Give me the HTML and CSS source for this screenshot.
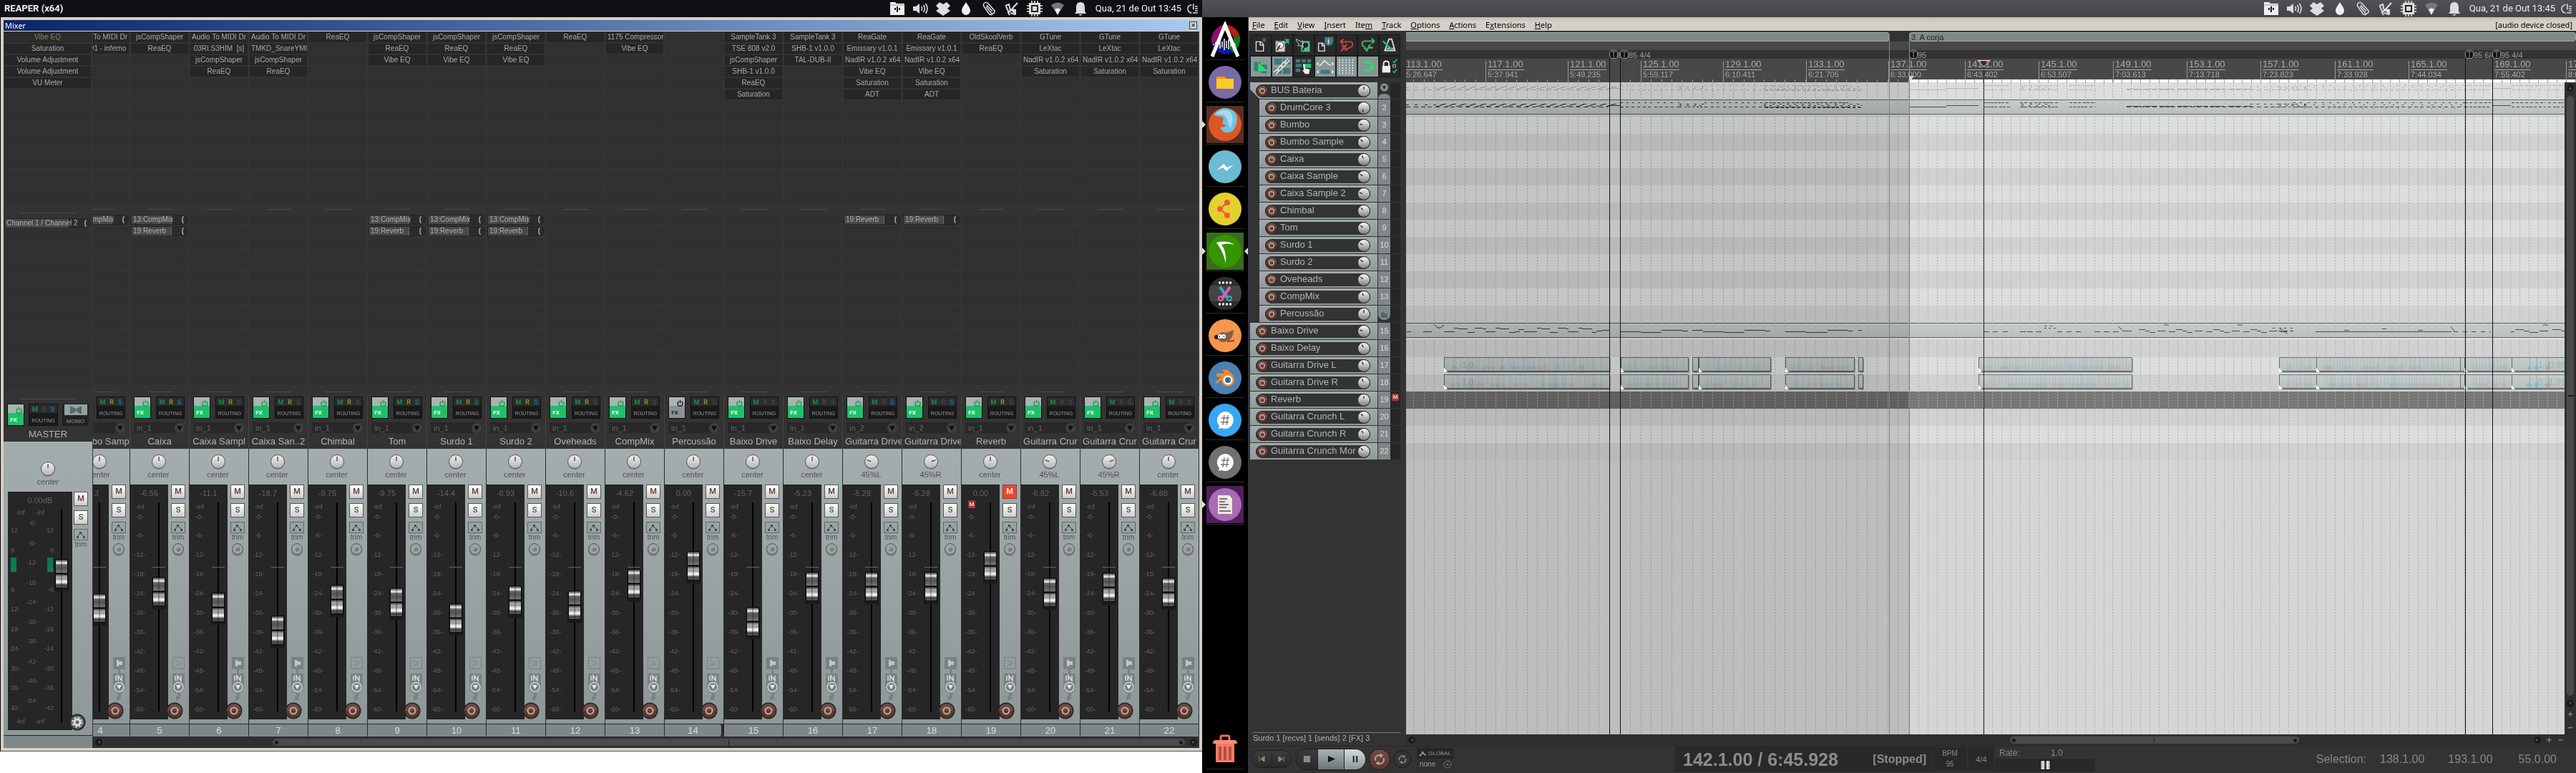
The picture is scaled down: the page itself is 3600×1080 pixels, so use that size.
FILE: index.html
```html
<!DOCTYPE html>
<html lang="pt-BR">
<head>
<meta charset="utf-8">
<title>REAPER (x64)</title>
<link rel="stylesheet" href="styles.css">
</head>
<body>
<svg class="defs" aria-hidden="true">
  <defs>
    <linearGradient id="knobFill" x1="0" y1="0" x2="0" y2="1"><stop offset="0" stop-color="#f2f2f2"/><stop offset="1" stop-color="#b4b4b4"/></linearGradient>
    <linearGradient id="ballFill" x1="0" y1="0" x2="0" y2="1"><stop offset="0" stop-color="#fff"/><stop offset="1" stop-color="#777"/></linearGradient>
    <linearGradient id="armFill" x1="0" y1="0" x2="0" y2="1"><stop offset=".5" stop-color="#6f4a40"/><stop offset=".5" stop-color="#5c372d"/></linearGradient>
    <linearGradient id="itemFill" x1="0" y1="0" x2="0" y2="1"><stop offset="0" stop-color="#aeb5b5"/><stop offset="1" stop-color="#a2a8a8"/></linearGradient>
  </defs>
  <symbol id="i-folder" viewBox="0 0 24 24"><path d="M2 3h7l2 2h11v16H2z" fill="#eee"/><path d="M2 7h20" stroke="#999"/><path d="M12 9v8M9 11v3M15 11v3" stroke="#111" stroke-width="2"/></symbol>
  <symbol id="i-sound" viewBox="0 0 24 24"><path d="M2 9h4l5-4v14l-5-4H2z" fill="#ddd"/><path d="M13.500 9q2 3 0 6M16.500 7q3.500 5 0 10M19.500 5q5 7 0 14" fill="none" stroke="#ddd" stroke-width="1.600"/></symbol>
  <symbol id="i-dropbox" viewBox="0 0 24 24"><path d="M7 3l5 3 5-3 5 5-4 4 4 3-4 3-6 4-6-4-4-3 4-3-4-4z" fill="#ddd"/></symbol>
  <symbol id="i-drop" viewBox="0 0 24 24"><path d="M12 3c3 5 6 8 6 12a6 6 0 0 1-12 0c0-4 3-7 6-12z" fill="#eee"/></symbol>
  <symbol id="i-clip" viewBox="0 0 24 24"><path d="M8 9l7 9a3 3 0 0 0 5-3L11 5a3.500 3.500 0 0 0-6 4l7 10a4 4 0 0 0 5 1M9 7l8 9" fill="none" stroke="#ddd" stroke-width="1.500"/></symbol>
  <symbol id="i-guitar" viewBox="0 0 24 24"><path d="M3 8l5-2 2 9L20 4M10 15l-3 3 2 3M12 13l5 1-1 6-6-2M4 9l4 9" fill="none" stroke="#ddd" stroke-width="2"/><path d="M10 14l8-1v8z" fill="#ddd"/></symbol>
  <symbol id="i-chip" viewBox="0 0 24 24"><path d="M8 1v22M12 1v22M16 1v22M1 8h22M1 12h22M1 16h22" stroke="#ddd" stroke-width="1.600"/><path d="M4 4h16v16H4z" fill="#ddd"/><path d="M7 7h10v10H7z" fill="#222"/><path d="M9 9h6v6H9z" fill="#ddd"/></symbol>
  <symbol id="i-wifi" viewBox="0 0 24 24"><path d="M3 7q9-7 18 0l-9 14z" fill="#777"/><path d="M8 13q4-3 8 0l-4 8z" fill="#eee"/></symbol>
  <symbol id="i-bell" viewBox="0 0 24 24"><path d="M12 3c5 0 6 4 6 8v5l2 3H4l2-3v-5c0-4 1-8 6-8zM9 20h6l-3 2z" fill="#ddd"/></symbol>
  <symbol id="i-power" viewBox="0 0 24 24"><path d="M10 5a7.500 7.500 0 0 0 0 15M13 3v11M16 8h5M16 12h5M16 16h5M12 20h9" fill="none" stroke="#ddd" stroke-width="2"/></symbol>
  <symbol id="i-loop" viewBox="0 0 20 20"><path d="M4 12a6 6 0 0 1 8-8M16 8a6 6 0 0 1-8 8" fill="none" stroke="currentColor" stroke-width="2.200"/><path d="M11 1l5 3-5 4zM9 19l-5-3 5-4z" fill="currentColor"/></symbol>
</svg>

<main class="desktop">
  <section class="monitor monitor-left">
    <header class="topbar topbar-dark">
      <h1 class="topbar-title">REAPER (x64)</h1>
      <div class="tray"></div>
    </header>
    <section class="window" aria-label="Mixer">
      <div class="window-title"><span>Mixer</span><button class="close" aria-label="Close">✕</button></div>
      <div class="mixer">
        <div class="master" id="master"></div>
        <div class="mixer-tracks">
          <div class="channels" id="channels"></div>
          <div class="hscroll"><i class="dot">◂</i><div class="mixer-thumb"><i></i><b></b><i></i></div><i class="dot">▸</i></div>
        </div>
      </div>
    </section>
  </section>

  <section class="monitor monitor-right">
    <header class="topbar topbar-grey"><div class="tray"></div></header>
    <div class="workspace">
      <nav class="dock" aria-label="Dock">
        <button class="app" aria-label="Launcher"><svg viewBox="0 0 52 52"><g fill="none" stroke-width="9" opacity=".8"><path d="M12 30A17 17 0 0 1 26 9" stroke="#b3128a"/><path d="M26 9a17 17 0 0 1 16 12" stroke="#e02810"/><path d="M42 21a17 17 0 0 1-8 19" stroke="#149a20"/><path d="M34 40a17 17 0 0 1-22-10" stroke="#1420c0"/></g><path d="M8 49L26 5l18 44" fill="none" stroke="#fff" stroke-width="5"/><path d="M10 31v2M13 29v6M16 30v4M19 26v12M22 28v8M25 24v16M28 27v10M31 25v14M34 29v6M37 28v8M40 31v2" stroke="#fff" stroke-width="1.500"/></svg></button>
        <button class="app" aria-label="Files"><svg viewBox="0 0 52 52"><circle cx="26" cy="26" r="23" fill="#7a6ba5"/><path d="M14 18h12l2 3v13H14z" fill="#f9940a"/><path d="M14 21h24v14H14z" fill="#ffca28"/></svg></button>
        <button class="app firefox running" aria-label="Firefox"><svg viewBox="0 0 52 52"><circle cx="26" cy="26" r="23" fill="#de5626"/><path d="M10 12Q22-2 36 6q10 6 5 22-4 11-15 9-8-4-5-8 5 2 6-2-6-2-4-6 2-4-1-6-8 0-12-3z" fill="#6cc4e2"/><path d="M12 11q14-10 22-2 5 10 0 22-4-6-5-12-2-7-8-7z" fill="#a7dbee"/></svg></button>
        <button class="app" aria-label="Messenger"><svg viewBox="0 0 52 52"><circle cx="26" cy="26" r="23" fill="#6dbad2"/><path d="M14 31l10-9 5 5 9-4-10 9-5-5z" fill="#fff"/></svg></button>
        <button class="app" aria-label="Share"><svg viewBox="0 0 52 52"><circle cx="26" cy="26" r="23" fill="#e2d02e"/><path d="M29 17L19 26l10 9" fill="none" stroke="#f4593a" stroke-width="2"/><g fill="#f4593a"><circle cx="29" cy="17" r="4"/><circle cx="19" cy="26" r="4"/><circle cx="29" cy="35" r="4"/></g></svg></button>
        <button class="app reaper running" aria-label="Reaper"><svg viewBox="0 0 52 52"><circle cx="26" cy="26" r="23" fill="#349500"/><path d="M14 14q15-4 25 3-10-3-18 0 7 8 6 26Q24 27 14 14z" fill="#fff"/></svg></button>
        <button class="app" aria-label="Video editor"><svg viewBox="0 0 52 52"><circle cx="26" cy="26" r="23" fill="#444"/><path d="M6 15a23 23 0 0 1 40 0zM6 37a23 23 0 0 0 40 0z" fill="#2d2d2d"/><path d="M17 11h20M17 41h20" stroke="#fff" stroke-width="3" stroke-dasharray="3 2"/><path d="M19 17l11 16" stroke="#3ba6c0" stroke-width="4"/><path d="M33 17L22 33" stroke="#e05ab4" stroke-width="4"/><circle cx="32" cy="33" r="3" fill="none" stroke="#3ba6c0" stroke-width="2"/><circle cx="20" cy="33" r="3" fill="none" stroke="#e05ab4" stroke-width="2"/></svg></button>
        <button class="app" aria-label="GIMP"><svg viewBox="0 0 52 52"><circle cx="26" cy="26" r="23" fill="#f7964d"/><path d="M13 27q7-8 15-5l10-4q-1 11-6 14-11 6-15 0z" fill="#7c6146"/><circle cx="14" cy="28" r="3" fill="#222"/><circle cx="19" cy="27" r="3" fill="#fff"/><circle cx="24" cy="27" r="3" fill="#fff"/><path d="M18 27h1M24 27h1" stroke="#000" stroke-width="2"/><path d="M29 34l10-1" stroke="#c22" stroke-width="2"/></svg></button>
        <button class="app" aria-label="Blender"><svg viewBox="0 0 52 52"><circle cx="26" cy="26" r="23" fill="#4a80b4"/><path d="M13 33l13-10H16v-2h13l-4-5h4l8 8" fill="none" stroke="#f28c28" stroke-width="3"/><circle cx="30" cy="29" r="9" fill="#f28c28"/><circle cx="30" cy="29" r="6.500" fill="#fff"/><circle cx="30" cy="29" r="4" fill="#2a6aa8"/></svg></button>
        <button class="app" aria-label="Chat"><svg viewBox="0 0 52 52"><circle cx="26" cy="26" r="23" fill="#38a7f0"/><path d="M26 14a12 12 0 1 1-5 23l-4 1 1-4a12 12 0 0 1 8-20z" fill="#fff"/><path d="M25 19l-2 14M30 19l-2 14M21 23h11M20 29h11" stroke="#777" stroke-width="1.300"/></svg></button>
        <button class="app" aria-label="Chat offline"><svg viewBox="0 0 52 52"><circle cx="26" cy="26" r="23" fill="#717171"/><path d="M26 14a12 12 0 1 1-5 23l-4 1 1-4a12 12 0 0 1 8-20z" fill="#fff"/><path d="M25 19l-2 14M30 19l-2 14M21 23h11M20 29h11" stroke="#777" stroke-width="1.300"/></svg></button>
        <button class="app notes running" aria-label="Notes"><svg viewBox="0 0 52 52"><circle cx="26" cy="26" r="23" fill="#a86cb4"/><path d="M16 13h16l4 5v21H16z" fill="#ecebda"/><path d="M31 13l5 6h-5z" fill="#fff"/><path d="M18 18h11M18 22h8M18 26h13M18 30h10M18 35h16" stroke="#84698c" stroke-width="2"/></svg></button>
        <button class="app trash" aria-label="Trash"><svg viewBox="0 0 52 52"><path d="M20 13v-4q0-2 2-2h8q2 0 2 2v4" fill="none" stroke="#ee6f58" stroke-width="3"/><path d="M9 18q0-5 4-5h26q4 0 4 5z" fill="#fb8d78"/><path d="M13 18h26v26H13z" fill="#f27c66"/><path d="M19 22v19M26 22v19M33 22v19" stroke="#b54c40" stroke-width="4"/></svg></button>
      </nav>

      <section class="daw">
        <nav class="menubar">
          <a href="#"><u>F</u>ile</a><a href="#"><u>E</u>dit</a><a href="#"><u>V</u>iew</a><a href="#"><u>I</u>nsert</a><a href="#">Ite<u>m</u></a><a href="#"><u>T</u>rack</a><a href="#"><u>O</u>ptions</a><a href="#"><u>A</u>ctions</a><a href="#">E<u>x</u>tensions</a><a href="#"><u>H</u>elp</a>
          <span class="device">[audio device closed]</span>
        </nav>
        <div class="project">
          <aside class="tcp">
            <div class="toolbar">
              <button aria-label="New project"><svg viewBox="0 0 30 30"><path d="M8 10h7l4 4v10H8zM14 10v5h5" fill="none" stroke="#ddd" stroke-width="1.500"/><path d="M20 4v7M17 5l6 5M23 5l-6 5" stroke="#4c9a70"/></svg></button>
              <button aria-label="Open project"><svg viewBox="0 0 30 30"><rect x="5" y="9" width="14" height="16" fill="#ccc"/><circle cx="12" cy="15" r="5" fill="#fff" stroke="#333"/><path d="M12 15l-5 8" stroke="#333" stroke-width="2"/><path d="M16 14l5-5-3-3h7v8l-3-3-4 4z" fill="#1ec06c"/></svg></button>
              <button aria-label="Save project"><svg viewBox="0 0 30 30"><rect x="11" y="9" width="13" height="16" fill="#4cbd78"/><circle cx="18" cy="15" r="4.500" fill="#272727" stroke="#9dc" /><path d="M18 15l-5 8" stroke="#222" stroke-width="2"/><path d="M4 6l7 4 2-2v8H6l2-2-4-5z" fill="#333" stroke="#ccc"/></svg></button>
              <button aria-label="Project settings"><svg viewBox="0 0 30 30"><path d="M5 12h6l3 3v9H5zM10 12v4h4" fill="none" stroke="#ddd" stroke-width="1.500"/><path d="M14 3h13v7q-1 6-7 6-6-1-6-7z" fill="#42777a"/><path d="M20 7v6M20 5v1" stroke="#ddd" stroke-width="2"/></svg></button>
              <button aria-label="Undo"><svg viewBox="0 0 30 30"><path d="M7 10h13q4 0 4 4t-7 6l-5 3M10 6l-4 4 4 4" fill="none" stroke="#cb4242" stroke-width="2"/><path d="M8 15l7 8M15 14l-8 10" stroke="#cb4242" stroke-width="2.500"/></svg></button>
              <button aria-label="Redo"><svg viewBox="0 0 30 30"><path d="M24 9H11q-5 0-5 4t5 5M20 5l4 4-4 4" fill="none" stroke="#49b56e" stroke-width="2"/><path d="M9 19l4 4 5-9M17 19h5" fill="none" stroke="#49b56e" stroke-width="2.500"/></svg></button>
              <button aria-label="Metronome"><svg viewBox="0 0 30 30"><path d="M8 23L14 6h4l5 17zM11 20h10" fill="none" stroke="#ddd" stroke-width="2"/><path d="M5 9l14 13" stroke="#1ec06c" stroke-width="2.500"/><path d="M7 13l6-2-2 5z" fill="#1ec06c"/></svg></button>
              <button class="on" aria-label="Auto crossfade"><svg viewBox="0 0 30 30"><path d="M5 8h10v14H5zM15 12h9v13h-9z" fill="#40787a"/><path d="M11 8l14 14H11z" fill="#22e06c"/></svg></button>
              <button class="on" aria-label="Item grouping"><svg viewBox="0 0 30 30"><path d="M3 3h11v9H3zM16 3h11v9H16zM3 17h11v9H3zM16 17h11v9H16z" fill="#40787a"/><path d="M4 25L25 4" stroke="#ddd" stroke-width="6"/><path d="M4 25L25 4" stroke="#6a7a7a" stroke-width="2" stroke-dasharray="5 3"/></svg></button>
              <button aria-label="Ripple edit"><svg viewBox="0 0 30 30"><path d="M3 4h7v5H3zM12 4h6v5h-6zM20 4h6v5h-6zM3 11h9v5H3zM3 18h7v5H3z" fill="#40787a"/><path d="M14 11h12v6H14z" fill="#1ed068"/><path d="M14 11l3 1v6l7 1-1 7h-6l-4-5 2-1z" fill="#eee"/></svg></button>
              <button class="on" aria-label="Move envelopes"><svg viewBox="0 0 30 30"><path d="M8 20h14v6H8z" fill="#40787a"/><path d="M6 14l3-2 5-6 5 5 4 2" fill="none" stroke="#eee" stroke-width="1.500"/><path d="M5 8L2 11l3 3zM25 8l3 3-3 3zM5 20l-3 3 3 3zM25 20l3 3-3 3z" fill="#eee"/></svg></button>
              <button class="on" aria-label="Grid lines"><svg viewBox="0 0 30 30"><path d="M4 4v22M9 4v22M14 4v22M19 4v22M24 4v22" stroke="#fff" stroke-width="1.500" stroke-dasharray="2 2"/></svg></button>
              <button class="on" aria-label="Snap"><svg viewBox="0 0 30 30"><path d="M5 4v22M10 4v22M15 4v22M20 4v22M25 4v22" stroke="#40a060" stroke-dasharray="2 2"/><path d="M8 9h8q6 0 6 5t-6 6H8" fill="none" stroke="#22e06c" stroke-width="3"/></svg></button>
              <button aria-label="Lock settings"><svg viewBox="0 0 30 30"><path d="M4 14h12v10H4z" fill="#eee"/><path d="M6 14v-3q0-4 4-4t4 4v3" fill="none" stroke="#eee" stroke-width="2"/><path d="M20 7l2 2 4-5M20 22l2 2 4-5" fill="none" stroke="#1ed068" stroke-width="1.500"/><path d="M20 12h4v4h-4z" fill="none" stroke="#ccc"/></svg></button>
            </div>
            <div class="track-list" id="trackList"></div>
            <p class="status">Surdo 1 [recvs] 1 [sends] 2 [FX] 3</p>
          </aside>
          <section class="arrange">
            <div class="ruler">
              <div class="regions"></div><div class="markers"></div><div class="tempos"></div><div class="times"></div>
              <svg class="ruler-marks" id="rulerMarks"></svg>
              <div class="ruler-text" id="rulerText"></div>
            </div>
            <div class="arrange-body">
              <div class="lanes" id="lanes"></div>
              <div class="vscroll"><i class="dot">▴</i><div class="v-thumb"><b></b></div><i class="dot">▾</i><span>+</span><span>−</span></div>
            </div>
            <div class="hscroll arrange-hscroll"><i class="dot">◂</i><div class="arrange-thumb"><i></i><b></b><i></i></div><i class="dot">▸</i><span>+</span><span>−</span></div>
          </section>
        </div>
        <footer class="transport">
          <div class="pill small"><button aria-label="Go to start"><svg viewBox="0 0 12 12"><path d="M2 2v8M10 2L4 6l6 4z" fill="#888" stroke="#888"/></svg></button><button aria-label="Go to end"><svg viewBox="0 0 12 12"><path d="M10 2v8M2 2l6 4-6 4z" fill="#888" stroke="#888"/></svg></button></div>
          <div class="pill big"><button aria-label="Stop"><svg viewBox="0 0 12 12"><path d="M1 1h10v10H1z" fill="#888"/></svg></button><button class="play" aria-label="Play"><svg viewBox="0 0 12 12"><path d="M1 1l11 5-11 5z" fill="#111"/></svg></button><button class="pause" aria-label="Pause"><svg viewBox="0 0 12 12"><path d="M3 1h2v10H3zM8 1h2v10H8z" fill="#111"/></svg></button></div>
          <button class="round record" aria-label="Record"><svg><use href="#i-loop"/></svg></button>
          <button class="round repeat" aria-label="Repeat"><svg><use href="#i-loop"/></svg></button>
          <div class="global"><label for="auto"><svg viewBox="0 0 14 10"><path d="M1 8h3l3-6 3 4 3 2" fill="none" stroke="#999" stroke-width="2"/></svg>GLOBAL</label><select id="auto"><option>none</option></select></div>
          <div class="bigtime"><span>142.1.00 / 6:45.928</span><strong>[Stopped]</strong></div>
          <div class="bpm"><span>BPM</span><span>95</span></div>
          <div class="sig">4/4</div>
          <div class="rate"><label for="rate">Rate:</label><output>1.0</output><input id="rate" type="range" min="0" max="100" value="50"></div>
          <div class="selection"><span>Selection:</span><span>138.1.00</span><span>193.1.00</span><span>55.0.00</span></div>
        </footer>
      </section>
    </div>
  </section>
</main>
<script src="app.js"></script>
</body>
</html>
```

FILE: styles.css
```css
* { box-sizing: border-box; }
body { margin: 0; background: #fff; color: #aaa; font: 11px/14px "Liberation Sans", Arial, sans-serif; overflow: hidden; }
button, select, input { font: inherit; color: inherit; margin: 0; padding: 0; border: 0; background: none; }
button { display: flex; align-items: center; justify-content: center; }
svg { display: block; }
i { font-style: normal; }
.defs { position: absolute; width: 0; height: 0; }
.desktop { display: flex; height: 100vh; }
.monitor { display: flex; flex-direction: column; min-width: 0; }
.monitor-left { flex: 1680 1 0; padding-bottom: 30px; }
.monitor-right { flex: 1920 1 0; }

.topbar { flex: none; display: flex; align-items: center; height: 24px; padding: 0 4px 0 6px; color: #f0f0f0; font: 13px/24px Roboto, sans-serif; }
.topbar-dark { background: #0f1014; }
.topbar-grey { background: linear-gradient(#505155, #434447); }
.topbar-title { margin: 0; font: bold 13px/24px Roboto, sans-serif; }
.tray { display: flex; align-items: center; gap: 8px; margin-left: auto; }
.tray button, .tray svg { width: 24px; height: 24px; }
.tray time { padding: 0 1px; }
.tray .power { width: 18px; margin-left: -2px; }

.window { flex: 1; min-height: 0; display: flex; flex-direction: column; padding: 4px; background: #d4d0c8; border-left: 1px solid #000; border-bottom: 1px solid #555; }
.window-title { flex: none; display: flex; align-items: center; justify-content: space-between; height: 16px; padding: 0 3px 0 2px; border-bottom: 1px solid #d4d0c8; background: linear-gradient(90deg, #0a246a, #a6caf0); color: #fff; font: 11px/15px "Noto Sans", sans-serif; }
.close { width: 11px; height: 11px; background: #d4d0c8; border: 1px solid #444; color: #000; font: bold 8px/9px "DejaVu Sans", sans-serif; }
.mixer { flex: 1; min-height: 0; display: flex; background: #333; }
.mixer-tracks { flex: 1; min-width: 0; display: flex; flex-direction: column; }
.channels { flex: 1; min-height: 0; display: flex; justify-content: flex-end; overflow: hidden; }
.channel { flex: none; width: 83px; display: flex; flex-direction: column; }
.master { flex: none; width: 125px; display: flex; flex-direction: column; border-right: 1px solid #333; }

.fx-list { flex: none; display: flex; flex-direction: column; gap: 2px; padding: 1px 2px 0 1px; }
.slot { height: 14px; background: #303030; overflow: hidden; text-align: center; white-space: nowrap; color: #aaa; font-size: 10px; line-height: 14px; }
.slot.used { display: block; width: 100%; padding: 0 2px; background: #262626; }
.slot.offline { color: #8e7f59; background: #2c2c2c; box-shadow: inset 0 0 0 1px #262626; }
.rule { flex: none; width: 36px; height: 1px; margin: 9px auto 7px; background: #4c4c4c; }
.master .rule { width: 78px; margin-top: 14px; }
.sends { flex: 1; min-height: 0; overflow: hidden; display: flex; flex-direction: column; gap: 2px; padding: 0 2px 0 1px; }
.send { flex: none; height: 14px; border-radius: 0 7px 7px 0; background: #303030; color: #444; text-align: right; padding-right: 7px; font-size: 9px; line-height: 16px; }
.send.used { display: flex; justify-content: space-between; width: 100%; padding: 0 5px 0 0; border: 1px solid #242424; background: #2b2b2b; color: #b0b0b0; font-size: 10px; line-height: 12px; white-space: nowrap; overflow: hidden; }
.send.used span { width: 56px; padding-left: 2px; background: #484848; border-right: 1px solid #666; text-align: left; }
.master .send.used span { width: 88px; overflow: visible; }
.sends + .rule, .master .sends + .rule { margin: 0 auto 6px; }
.io { flex: none; display: flex; gap: 7px; height: 31px; padding: 0 6px 0 5px; border-right: 1px solid #444; }
.master .io { gap: 6px; padding: 0 4px 0 5px; border: 0; }
.fx { flex: none; width: 24px; border: 1px solid #111; background: linear-gradient(#a8b5b0 40%, #1ec06a 40%); flex-direction: column; color: #fff; font: bold 8px/10px Roboto, sans-serif; }
.fx svg { width: 9px; height: 9px; margin: 2px 2px 4px auto; color: #159a50; }
.fx span { margin-right: 6px; }
.fx.off { background: linear-gradient(#a8b5b5 40%, #8a9494 40%); color: #222; }
.fx.off svg { color: #111; }
.routing { width: 41px; border: 1px solid #111; background: linear-gradient(#2c2c2c 40%, #1a1a1a 40%); flex-direction: column; gap: 3px; color: #999; font: 7px/11px "Liberation Sans", sans-serif; }
.routing .mrs { display: flex; gap: 6px; font: bold 9px/13px Roboto, sans-serif; color: #444; }
.mrs .m { color: #128f52; } .mrs .r { color: #8a9014; } .mrs .s { color: #12769a; }
.mono { width: 37px; background: #222; color: #999; flex-direction: column; gap: 4px; font: 8px/10px "Liberation Sans", sans-serif; }
.mono svg { width: 32px; height: 15px; background: #93a0a0; }
.input { flex: none; height: 21px; padding: 5px 7px 1px 5px; border-right: 1px solid #444; }
.input select { display: block; width: 71px; height: 15px; padding-left: 4px; appearance: none; border-radius: 0 8px 8px 0; background: #282828 url("data:image/svg+xml,%3Csvg xmlns='http://www.w3.org/2000/svg' width='14' height='14'%3E%3Ccircle cx='7' cy='7' r='7' fill='%23404040'/%3E%3Cpath d='M3 4h8l-4 7z' fill='%23111'/%3E%3C/svg%3E") right no-repeat; color: #666; font-size: 11px; }
.name { flex: none; height: 21px; padding: 0 3px; border-right: 1px solid #444; text-align: center; white-space: nowrap; overflow: hidden; color: #b4b4b4; font-size: 13px; line-height: 21px; }
.master .name { border: 0; height: 22px; line-height: 23px; }
.strip { flex: none; position: relative; background: linear-gradient(#a4adad, #8e9898); border-right: 1px solid #2a2a2a; height: 384px; }
.master .strip { height: 410px; border: 0; }
.pan { display: flex; flex-direction: column; align-items: center; height: 50px; padding: 7px 3px 0 0; color: #4d5353; }
.master .pan { height: 70px; padding: 27px 0 0; }
.pan svg { width: 22px; height: 22px; }
.deck { display: flex; height: 328px; }
.master .deck { height: 333px; padding-left: 6px; }
.meter { position: relative; flex: none; width: 53px; background: #262626; border-top: 1px solid #1a1a1a; border-bottom: 1px solid #1a1a1a; color: #646464; }
.master .meter { width: 90px; }
.db { height: 21px; line-height: 22px; text-align: center; }
.meter-row { position: relative; display: flex; gap: 4px; }
.scale { width: 27px; text-align: center; font-size: 9px; }
.scale div { height: 27px; line-height: 27px; }
.scale .inf { height: 16px; line-height: 18px; }
.scale .zero { height: 20px; line-height: 14px; }
.fader { appearance: none; writing-mode: vertical-lr; direction: rtl; width: 18px; height: 292px; margin-top: 3px; background: linear-gradient(#666, #666) 0 90px / 18px 1px no-repeat, linear-gradient(90deg, transparent 8px, #000 8px, #000 10px, transparent 10px); }
.fader::-webkit-slider-thumb { appearance: none; width: 18px; height: 41px; border: 1px solid #0a0a0a; background: linear-gradient(90deg, transparent 7px, #0004 7px, #0004 9px, transparent 9px), linear-gradient(#333, #888 2px, #ddd 4px, #eee 5px, #666 7px, #555 12px, #777 18px, #000 19px, #000 20px, #555 21px, #aaa 24px, #999 27px, #eee 30px, #eee 32px, #444 35px, #555 39px); box-shadow: 0 3px 0 1px #1a1a1a; }
.master .fader { height: 298px; background: linear-gradient(90deg, transparent 8px, #000 8px, #000 10px, transparent 10px); }
.master-scale { display: grid; grid-template: 15px 277px 15px / 20px 20px 20px; width: 62px; padding-left: 4px; font-size: 9px; line-height: 14px; }
.master-scale .col { display: flex; flex-direction: column; justify-content: space-between; height: 262px; text-align: center; }
.master-scale .outer { margin-top: 10px; text-align: left; }
.master-scale .right { text-align: right; }
.master-scale .infs { grid-column: 1 / 4; display: flex; gap: 15px; padding-left: 7px; }
.master .meter-row { gap: 4px; }
.bar { position: absolute; top: 91px; width: 8px; height: 20px; background: #0a7a4a; }
.bar.left { left: 4px; } .bar.right { left: 55px; }
.side { flex: 1; display: flex; flex-direction: column; align-items: center; padding-right: 1px; color: #4d5353; font-size: 9px; }
.master .side { padding-right: 4px; }
.ms { flex: none; width: 20px; height: 20px; margin-bottom: 6px; border: 1px solid #555; background: linear-gradient(#fff, #ccc); font: 500 11px/18px Roboto, sans-serif; color: #5c372d; }
.ms.solo { color: #4d5a24; }
.ms.muted { background: #f4452a; color: #fff; }
.env { flex: none; width: 20px; height: 16px; border: 1px solid #5c6666; background: #98a4a4; }
.env svg { width: 16px; height: 12px; }
.side > span { line-height: 11px; font-size: 10px; }
.phase { flex: none; width: 16px; height: 16px; margin-top: 3px; border: 1px solid #555; border-radius: 8px; background: #9ba3a3; box-shadow: 0 2px 0 #7c8484; font-size: 9px; }
.monitoring { width: 18px; height: 64px; margin: auto 0 23px; }
.arm { position: absolute; left: 50px; top: 354px; width: 24px; height: 24px; }
.arm svg { width: 24px; height: 24px; }
.master .arm { left: 91px; top: 380px; }
.muted-badge { position: absolute; left: 9px; top: 21px; width: 10px; height: 11px; border-radius: 1px; background: #a83438; color: #ddd; font: bold 8px/11px Roboto, sans-serif; text-align: center; }
.number { flex: none; height: 18px; border: solid #2a2a2a; border-width: 1px 1px 0 0; background: #7f8888; color: #ddd; text-align: center; font-size: 13px; line-height: 18px; }
.number.folder-end { border-right: 4px solid #2a2a2a; border-radius: 0 6px 6px 0; }
.master .number { border-right: 0; }

.hscroll { flex: none; display: flex; align-items: center; height: 16px; padding: 0 3px; background: #2f2f2f; }
.dot { flex: none; width: 10px; height: 10px; border-radius: 5px; background: #1a1a1a; color: #555; font: 8px/10px "DejaVu Sans", sans-serif; text-align: center; }
.mixer-thumb, .arrange-thumb { display: flex; align-items: center; justify-content: space-between; height: 10px; margin: 0 7px 0 238px; flex: 1; padding: 0 3px; border-radius: 5px; background: #4b4b4b; }
.mixer-thumb i, .arrange-thumb i { width: 5px; height: 5px; border-radius: 3px; background: #1a1a1a; }
.mixer-thumb b, .arrange-thumb b { width: 1px; height: 7px; background: #1a1a1a; }

.workspace { flex: 1; min-height: 0; display: flex; background: #000; }
.dock { flex: none; width: 64px; display: flex; flex-direction: column; align-items: center; padding: 6px 0 5px; gap: 5px; }
.app { position: relative; width: 54px; height: 54px; padding-bottom: 2px; border-bottom: 1px solid #2c2c2c; }
.app svg { width: 52px; height: 52px; }
.firefox svg { background: #5c2f20; } .reaper svg { background: #3a6a20; } .notes svg { background: #50205c; }
.running::before { content: ""; position: absolute; left: -5px; top: 21px; border: solid transparent; border-width: 5px 0 5px 5px; border-left-color: #ddd; }
.reaper::after { content: ""; position: absolute; right: -5px; top: 21px; border: solid transparent; border-width: 5px 5px 5px 0; border-right-color: #ddd; }
.trash { margin-top: auto; }

.daw { flex: 1; min-width: 0; display: flex; flex-direction: column; border-left: 1px solid #26346a; background: #333; }
.menubar { flex: none; display: flex; gap: 13px; height: 20px; padding: 0 5px; border-bottom: 1px solid #2c3628; background: linear-gradient(#bfbab4, #d4d0c8 6px); font: 11px/22px "Noto Sans", sans-serif; color: #000; }
.menubar a { color: #000; text-decoration: none; }
.device { margin-left: auto; }
.project { flex: 1; min-height: 0; display: flex; }
.tcp { flex: none; width: 220px; display: flex; flex-direction: column; padding: 4px 8px 0 2px; }
.toolbar { flex: none; display: grid; grid-template-columns: repeat(7, 30px); grid-auto-rows: 30px; height: 60px; background: #1a1a1a; }
.toolbar button { margin: 1px; background: #292929; }
.toolbar svg { width: 28px; height: 28px; }
.toolbar .on { background: #8a9797; }
.track-list { margin-top: 7px; }
.track { display: flex; height: 24px; padding-bottom: 1px; gap: 1px; }
.track.child { padding-left: 13px; }
.panel { flex: 1; display: flex; padding: 3px 10px 2px 8px; background: linear-gradient(#a3acac, #909a9a); }
.track.parent .panel { clip-path: polygon(0 0, 100% 0, 100% 100%, 13px 100%, 0 10px); }
.track-name { flex: 1; min-width: 0; display: flex; align-items: center; height: 18px; border-radius: 9px; background: #333; color: #b4b4b4; font-size: 13px; line-height: 16px; white-space: nowrap; }
.track-name svg { width: 18px; height: 18px; }
.track-name button { flex: none; width: 18px; height: 18px; }
.track-name span { flex: 1; padding: 0 0 2px 3px; overflow: hidden; }
.tnum { width: 17px; background: #7f8888; color: #ddd; text-align: center; line-height: 23px; }
.tnum svg { width: 17px; height: 23px; background: #333; }
.tmeter { width: 14px; margin-left: -1px; padding: 3px 2px; background: #262626; }
.tmeter b { display: block; width: 10px; border-radius: 1px; background: #a83438; color: #ddd; font: bold 8px/10px Roboto, sans-serif; text-align: center; }
.status { margin: auto 0 3px 4px; border-top: 1px solid #777; color: #b0b0b0; line-height: 15px; }

.arrange { flex: 1; min-width: 0; display: flex; flex-direction: column; }
.ruler { flex: none; position: relative; height: 71px; padding-top: 1px; overflow: hidden; background: #333; }
.regions { height: 13px; } .markers { height: 12px; background: #484848; } .tempos { height: 12px; } .times { height: 33px; background: #484848; }
.ruler-marks, .ruler-text { position: absolute; left: 0; top: 0; width: 100%; height: 71px; }
.ruler-text > * { position: absolute; white-space: nowrap; }
.stamp { top: 39px; color: #a8a8a8; line-height: 13px; }
.stamp b { display: block; width: 51px; border-bottom: 1px solid #a8a8a8; font: 13px/14px "Liberation Sans", sans-serif; }
.tempo { top: 26px; display: flex; color: #999; line-height: 14px; height: 12px; }
.tempo i { width: 12px; height: 12px; border: 1px solid #999; border-radius: 4px; background: #111; text-align: center; line-height: 11px; font-size: 10px; }
.region-name { top: 1px; color: #222; }
.arrange-body { flex: 1; min-height: 0; display: flex; }
.lanes { position: relative; flex: 1; min-width: 0; background: #bcbebc; overflow: hidden; }
.lane { height: 24px; background: #b8b9b8; }
.lane:nth-child(odd) { background: #c4c6c4; }
.lane.muted { background: #5f605f; }
.canvas { position: absolute; left: 0; top: 0; width: 100%; height: 100%; }
.lighten { mix-blend-mode: plus-lighter; }
.vscroll { flex: none; width: 16px; display: flex; flex-direction: column; align-items: center; padding-top: 3px; background: #2f2f2f; }
.vscroll span, .arrange-hscroll span { color: #888; font: bold 13px/16px "Liberation Sans", sans-serif; }
.vscroll span { line-height: 19px; }
.v-thumb { flex: 1; display: flex; align-items: center; justify-content: center; width: 10px; margin: 6px 0; border-radius: 5px; background: #4b4b4b; }
.v-thumb b { width: 7px; height: 2px; background: #1a1a1a; }
.arrange-hscroll { gap: 8px; padding: 0 18px 0 3px; }
.arrange-thumb { flex: none; width: 25%; margin: 0 auto 0 51%; }

.transport { flex: none; display: flex; align-items: center; height: 38px; padding: 0 27px 2px 4px; border-top: 1px solid #2a2a2a; background: #333; color: #888; }
.pill { display: flex; border: 1px solid #1c1c1c; border-radius: 15px; overflow: hidden; background: #333; }
.pill.small { width: 56px; height: 25px; }
.pill.big { width: 98px; height: 30px; margin: 0 4px 0 6px; }
.pill button { flex: 1; border-right: 1px solid #222; background: linear-gradient(#3c3c3c, #2a2a2a); }
.pill button:last-child { border: 0; }
.pill svg { width: 11px; height: 11px; }
.pill .play { flex: 0 0 37px; background: linear-gradient(#a8b5b5, #6a7474); }
.pill .pause { background: linear-gradient(#d4dddd, #8a9494); }
.round { flex: none; border-radius: 50%; border: 1px solid #1c1c1c; background: #333; color: #888; }
.record { width: 30px; height: 30px; background: linear-gradient(#6f4a40, #5c372d); color: #bca69f; }
.record svg { width: 18px; height: 18px; }
.repeat { width: 25px; height: 25px; margin: 0 8px 0 4px; }
.repeat svg { width: 14px; height: 14px; }
.global { width: 51px; height: 31px; background: #262626; }
.global label { display: flex; align-items: center; gap: 2px; height: 15px; padding-left: 2px; color: #999; font: 8px/15px "Liberation Sans", sans-serif; }
.global label svg { width: 12px; height: 8px; }
.global select { width: 51px; height: 16px; padding-left: 4px; appearance: none; color: #999; font-size: 10px; background: #303030 url("data:image/svg+xml,%3Csvg xmlns='http://www.w3.org/2000/svg' width='14' height='12'%3E%3Ccircle cx='6' cy='6' r='5' fill='none' stroke='%23777'/%3E%3Cpath d='M4 5h4l-2 3z' fill='%23777'/%3E%3C/svg%3E") right no-repeat; }
.bigtime { display: flex; align-items: center; justify-content: space-between; width: 360px; height: 35px; margin-left: 309px; padding: 0 8px 0 12px; background: #292929; font: bold 25px/36px "Liberation Sans", sans-serif; color: #8c8c8c; white-space: nowrap; }
.bigtime strong { font-size: 16px; }
.bpm { display: flex; flex-direction: column; justify-content: space-between; width: 50px; height: 35px; padding: 2px 0; border: 1px solid #303030; background: #292929; text-align: center; font-size: 10px; }
.sig { width: 38px; height: 35px; border: 1px solid #303030; background: #292929; text-align: center; font-size: 11px; line-height: 35px; }
.rate { display: grid; grid-template: 17px 18px / 72px 68px; width: 140px; height: 35px; line-height: 18px; font-size: 12px; }
.rate label { padding-left: 6px; }
.rate output { padding-left: 6px; }
.rate input { grid-column: 1 / 3; appearance: none; width: 140px; height: 18px; background: #292929; }
.rate input::-webkit-slider-thumb { appearance: none; width: 15px; height: 14px; border: 1px solid #111; background: linear-gradient(90deg, #999, #eee 4px, #999 5px, #222 6px, #222 7px, #999 8px, #fff 9px, #888); }
.selection { display: flex; gap: 33px; margin-left: auto; font-size: 16px; line-height: 36px; }
.selection span:first-child { margin-right: -14px; }
.selection span:last-child { margin-left: 3px; }
```

FILE: app.js
```js
const tracks = [
  { n: 1, name: 'BUS Bateria', rot: 0, parent: true },
  { n: 2, name: 'DrumCore 3', rot: 200, child: true },
  { n: 3, name: 'Bumbo', rot: -75, child: true },
  { n: 4, name: 'Bumbo Sample', rot: -50, child: true, mix: { fx: ['Audio To MIDI Dr', 'PDM01 - inferno'], sends: ['13:CompMix'], mrs: 'MRS', db: '-12.3', top: 127, mon: 1 } },
  { n: 5, name: 'Caixa', rot: -25, child: true, mix: { fx: ['jsCompShaper', 'ReaEQ'], sends: ['13:CompMix', '19:Reverb'], mrs: 'MRS', db: '-6.56', top: 104 } },
  { n: 6, name: 'Caixa Sample', mixName: 'Caixa Sampl', rot: -55, child: true, mix: { fx: ['Audio To MIDI Dr', '03RI.S3HIM&nbsp; [s]', 'jsCompShaper', 'ReaEQ'], mrs: 'MR', db: '-11.1', top: 126, mon: 1 } },
  { n: 7, name: 'Caixa Sample 2', mixName: 'Caixa San..2', rot: -75, child: true, mix: { fx: ['Audio To MIDI Dr', 'TMKD_SnareYMC', 'jsCompShaper', 'ReaEQ'], mrs: 'MR', db: '-18.7', top: 158, mon: 1 } },
  { n: 8, name: 'Chimbal', rot: -40, child: true, mix: { fx: ['ReaEQ'], mrs: 'MR', db: '-8.75', top: 115 } },
  { n: 9, name: 'Tom', rot: -50, child: true, mix: { fx: ['jsCompShaper', 'ReaEQ', 'Vibe EQ'], sends: ['13:CompMix', '19:Reverb'], mrs: 'MRS', db: '-9.75', top: 119 } },
  { n: 10, name: 'Surdo 1', rot: -60, child: true, mix: { fx: ['jsCompShaper', 'ReaEQ', 'Vibe EQ'], sends: ['13:CompMix', '19:Reverb'], mrs: 'MRS', db: '-14.4', top: 141 } },
  { n: 11, name: 'Surdo 2', rot: -50, child: true, mix: { fx: ['jsCompShaper', 'ReaEQ', 'Vibe EQ'], sends: ['13:CompMix', '19:Reverb'], mrs: 'MRS', db: '-8.93', top: 116 } },
  { n: 12, name: 'Oveheads', rot: -50, child: true, mix: { fx: ['ReaEQ'], mrs: 'MR', db: '-10.6', top: 123 } },
  { n: 13, name: 'CompMix', rot: -20, child: true, mix: { fx: ['1175 Compressor', 'Vibe EQ'], mrs: 'MR', db: '-4.62', top: 93 } },
  { n: 14, name: 'Percussão', rot: 0, child: true, last: true, mix: { fx: [], fxOff: true, mrs: 'MR', db: '0.00', top: 68 } },
  { n: 15, name: 'Baixo Drive', rot: -70, mix: { fx: ['SampleTank 3', 'TSE 808 v2.0', 'jsCompShaper', 'SHB-1 v1.0.0', 'ReaEQ', 'Saturation'], mrs: 'M', db: '-15.7', top: 146, mon: 1 } },
  { n: 16, name: 'Baixo Delay', rot: -25, mix: { fx: ['SampleTank 3', 'SHB-1 v1.0.0', 'TAL-DUB-II'], mrs: 'M', db: '-5.23', top: 97, mon: 1 } },
  { n: 17, name: 'Guitarra Drive L', mixName: 'Guitarra Drive', rot: -25, mix: { fx: ['ReaGate', 'Emissary v1.0.1', 'NadIR v1.0.2 x64', 'Vibe EQ', 'Saturation', 'ADT'], sends: ['19:Reverb'], mrs: 'MS', db: '-5.28', top: 97, mon: 1, input: 'in_2', pan: '45%L' } },
  { n: 18, name: 'Guitarra Drive R', mixName: 'Guitarra Drive', rot: -25, mix: { fx: ['ReaGate', 'Emissary v1.0.1', 'NadIR v1.0.2 x64', 'Vibe EQ', 'Saturation', 'ADT'], sends: ['19:Reverb'], mrs: 'MS', db: '-5.28', top: 97, mon: 1, input: 'in_2', pan: '45%R' } },
  { n: 19, name: 'Reverb', rot: 0, muted: true, mix: { fx: ['OldSkoolVerb', 'ReaEQ'], mrs: 'MR', db: '0.00', top: 68 } },
  { n: 20, name: 'Guitarra Crunch L', mixName: 'Guitarra Crur', rot: -40, mix: { fx: ['GTune', 'LeXtac', 'NadIR v1.0.2 x64', 'Saturation'], mrs: 'M', db: '-6.82', top: 105, mon: 1, pan: '45%L' } },
  { n: 21, name: 'Guitarra Crunch R', mixName: 'Guitarra Crur', rot: -30, mix: { fx: ['GTune', 'LeXtac', 'NadIR v1.0.2 x64', 'Saturation'], mrs: 'M', db: '-5.53', top: 98, mon: 1, pan: '45%R' } },
  { n: 22, name: 'Guitarra Crunch Mor', mixName: 'Guitarra Crur', rot: -40, mix: { fx: ['GTune', 'LeXtac', 'NadIR v1.0.2 x64', 'Saturation'], mrs: 'M', db: '-6.88', top: 105, mon: 1 } },
];
const $ = (s) => document.querySelector(s);
const fill = (n, f) => Array.from({ length: n }, (_, i) => f(i)).join('');

/* ---------- system tray ---------- */
const trayIcon = (id) => `<button aria-label="${id}"><svg><use href="#i-${id}"/></svg></button>`;
document.querySelectorAll('.tray').forEach((t) => {
  t.innerHTML = ['folder', 'sound', 'dropbox', 'drop', 'clip', 'guitar', 'chip', 'wifi', 'bell'].map(trayIcon).join('') +
    '<time>Qua, 21 de Out 13:45</time>' + trayIcon('power').replace('<button', '<button class="power"');
});

/* ---------- mixer ---------- */
const fxList = (fx, offline) => `<div class="fx-list">${fill(15, (i) => fx[i]
  ? `<button class="slot used${offline && !i ? ' offline' : ''}">${fx[i]}</button>` : '<div class="slot"></div>')}</div><div class="rule"></div>`;
const sendList = (s = []) => `<div class="sends">${fill(15, (i) => s[i]
  ? `<button class="send used"><span>${s[i]}</span><b>(</b></button>` : '<div class="send">.</div>')}</div><div class="rule"></div>`;
const power = '<svg viewBox="0 0 10 10"><path d="M3 2a4 4 0 1 0 4 0M5 0v5" fill="none" stroke="currentColor" stroke-width="1.500"/></svg>';
const fxButton = (off) => `<button class="fx${off ? ' off' : ''}">${power}<span>FX</span></button>`;
const routing = (on) => `<button class="routing"><span class="mrs">${[...'MRS'].map((c) => `<i class="${on.includes(c) ? c.toLowerCase() : ''}">${c}</i>`).join('')}</span>ROUTING</button>`;
const panKnob = (label) => {
  const r = label === '45%L' ? -70 : label === '45%R' ? 70 : 0;
  return `<div class="pan"><svg viewBox="0 0 22 22"><circle cx="11" cy="12.500" r="9.500" fill="#7c8484"/><circle cx="11" cy="11" r="9.500" fill="url(#knobFill)" stroke="#555"/><path d="M11 4v6" stroke="#111" transform="rotate(${r} 11 11)"/></svg>${label}</div>`;
};
const sideTop = (muted) => `<button class="ms${muted ? ' muted' : ''}">M</button><button class="ms solo">S</button>
  <button class="env" aria-label="Envelope"><svg viewBox="0 0 16 12"><path d="M3 9l4-5 3 2 3 3" fill="none" stroke="#444c4c"/><path d="M2 8h3v3H2zM6 2h3v3H6zM11 8h3v3h-3z" fill="#444c4c"/></svg></button><span>trim</span>`;
const speaker = '<path d="M1 0h17v17H1z" fill="#788282"/><path d="M6 4h3v9H6zM9 6h5v5H9z" fill="#c0c6c6"/><path d="M8 17h3v6H8z" fill="#788282"/>';
const split = '<path d="M1.500 .5h16v16h-16zM5 4l4 3h4M5 13l4-3h4" fill="none" stroke="#788282"/>';
const monitoring = (on) => `<svg class="monitoring" viewBox="0 0 18 64">${on ? speaker : split}<path d="M1 23h17v18q-1 9-9 10-7-1-8-8z" fill="#788282"/>
  <path d="M5 26v7M8 33v-7l5 7v-7" fill="none" stroke="#d8dcdc" stroke-width="1.500"/><circle cx="9.500" cy="42" r="6.500" fill="none" stroke="#d0d4d4" stroke-width="1.500"/><path d="M6 39h7l-3.500 6z" fill="#e8e8e8"/><path d="M8 51h5l-2 6 2 1-7 3v-7l2 1z" fill="#788282"/></svg>`;
const armIcon = '<svg viewBox="0 0 24 24"><circle cx="12" cy="12" r="11.500" fill="#262626"/><circle cx="12" cy="12" r="10" fill="url(#armFill)"/><circle cx="12" cy="12" r="4.500" fill="none" stroke="#bca69f" stroke-width="2.200"/></svg>';
const gearIcon = '<svg viewBox="0 0 24 24"><circle cx="12" cy="12" r="11.500" fill="#262626"/><circle cx="12" cy="12" r="9.500" fill="#666"/><circle cx="12" cy="12" r="4" fill="none" stroke="#ddd" stroke-width="3"/><circle cx="12" cy="12" r="6.500" fill="none" stroke="#ddd" stroke-width="2" stroke-dasharray="2.500 2.600"/></svg>';

function channel(t) {
  const m = t.mix;
  return `<article class="channel">${fxList(m.fx)}${sendList(m.sends)}
    <div class="io">${fxButton(m.fxOff)}${routing(m.mrs)}</div>
    <div class="input"><select aria-label="Input ${t.n}"><option>${m.input || 'in_1'}</option></select></div>
    <div class="name">${t.mixName || t.name}</div>
    <div class="strip">${panKnob(m.pan || 'center')}
      <div class="deck"><div class="meter"><div class="db">${m.db}</div>
        <div class="meter-row"><div class="scale"><div class="inf">${t.muted ? '' : '-inf'}</div><div class="zero">-0-</div>${fill(10, (i) => `<div>-${(i + 1) * 6}-</div>`)}</div>
        <input class="fader" type="range" aria-label="Volume ${t.n}" min="0" max="251" value="${251 - m.top}"></div>
        ${t.muted ? '<div class="muted-badge">M</div>' : ''}</div>
        <div class="side">${sideTop(t.muted)}<button class="phase" aria-label="Phase">⌀</button>${monitoring(m.mon)}</div></div>
      <button class="arm" aria-label="Record arm">${armIcon}</button></div>
    <div class="number${t.last ? ' folder-end' : ''}">${t.n}</div></article>`;
}
$('#channels').innerHTML = tracks.filter((t) => t.mix).map(channel).join('');

const outer = [12, 6, 0, 6, 12, 18, 24, 30, 36, 42];
$('#master').innerHTML = fxList(['Vibe EQ', 'Saturation', 'Volume Adjustment', 'Volume Adjustment', 'VU Meter'], true) +
  sendList(['Channel 1 / Channel 2']) +
  `<div class="io">${fxButton()}${routing('MS')}<button class="mono"><svg viewBox="0 0 32 15"><path d="M8 3h2l6 3v4l-6 3H8zM24 3h-2l-5 3v4l5 3h2z" fill="#5c6666"/></svg>MONO</button></div>
  <div class="name">MASTER</div>
  <div class="strip">${panKnob('center')}<div class="deck"><div class="meter"><div class="bar left"></div><div class="bar right"></div><div class="db">0.00dB</div>
    <div class="meter-row"><div class="master-scale"><div class="infs"><span>-inf</span><span>-inf</span></div>
      <div class="col outer">${outer.map((v, i) => `<span>${v}${i > 1 ? '-' : ''}</span>`).join('')}</div>
      <div class="col">${fill(10, (i) => `<span>-${i * 6}-</span>`)}</div>
      <div class="col outer right">${outer.map((v, i) => `<span>${i > 1 ? '-' : ''}${v}</span>`).join('')}</div>
      <div class="infs"><span>-inf</span><span>-inf</span></div></div>
    <input class="fader" type="range" aria-label="Master volume" min="0" max="257" value="188"></div></div>
    <div class="side">${sideTop()}</div></div>
    <button class="arm" aria-label="Master settings">${gearIcon}</button></div>
  <div class="number"></div>`;

/* ---------- track panels ---------- */
const foldIcon = '<svg viewBox="0 0 17 23"><circle cx="8.500" cy="7" r="5.500" fill="#8a8f8f"/><path d="M5.500 5h6l-3 5z" fill="#333"/><path d="M0 23q0-7 8.500-7t8.500 7z" fill="#7f8888"/></svg>';
const folderIcon = '<svg viewBox="0 0 17 23"><path d="M0 0h17v14q-2 6-8.500 6T0 14z" fill="#7f8888"/><path d="M4 9h4l1 2h4v6H4z" fill="#5c6464"/></svg>';
$('#trackList').innerHTML = tracks.map((t) => `<div class="track${t.child ? ' child' : ''}${t.parent ? ' parent' : ''}">
  <div class="panel"><div class="track-name"><button aria-label="Arm ${t.name}">${armIcon}</button><span>${t.name}</span>
  <button aria-label="Volume ${t.name}"><svg viewBox="0 0 18 18"><circle cx="9" cy="9" r="8.500" fill="url(#ballFill)" stroke="#222"/><path d="M9 3v4" stroke="#111" stroke-width="1.200" transform="rotate(${t.rot} 9 9)"/></svg></button></div></div>
  <div class="tnum">${t.parent ? foldIcon : t.last ? folderIcon : t.n}</div><div class="tmeter">${t.muted ? '<b>M</b>' : ''}</div></div>`).join('');

/* ---------- timeline: positions are in pixels from the left edge of the view ---------- */
const SEL = 703, CURSOR = 807;
const bars = [[0, '113', '5:26.647'], [111, '117', '5:37.941'], [226, '121', '5:49.235'], [328, '125', '5:59.117'], [443, '129', '6:10.411'], [559, '133', '6:21.705'], [674, '137', '6:33.000'], [781, '141', '6:43.402'], [884, '145', '6:53.507'], [988, '149', '7:03.613'], [1091, '153', '7:13.718'], [1194, '157', '7:23.823'], [1298, '161', '7:33.928'], [1401, '165', '7:44.034'], [1518, '169', '7:55.402'], [1621, '173', '8:05.507']];
const tempos = [[284, '8'], [299, '85 4/4'], [703, '95'], [1480, '95 6/4'], [1518, '95 4/4']];
const grid = [];
for (let x = 111 - 7 * 14.375; x < 284; x += 14.375) grid.push(Math.round(x));
for (let x = 299; x < 702; x += 14.375) grid.push(Math.round(x));
for (let x = 703; x < 1640; x += 12.93) grid.push(Math.round(x));

$('#rulerText').innerHTML = bars.map(([x, b, t]) => `<div class="stamp" style="left:${x ? x + 3 : 0}px"><b>${b}.1.00</b>${t}</div>`).join('') +
  tempos.map(([x, t]) => `<div class="tempo" style="left:${x}px"><i>T</i>${t}</div>`).join('') +
  `<div class="region-name" style="left:${SEL + 3}px">3&nbsp; A corja</div>`;
$('#rulerMarks').innerHTML =
  `<rect x="-5" y="1.500" width="680" height="12" rx="3" fill="#7f8888" stroke="#a0a8a8"/><rect x="${SEL}.5" y="1.500" width="931" height="12" rx="3" fill="#7f8888" stroke="#a0a8a8"/>
  <path d="M675.500 8v63M${SEL}.5 8v63" stroke="#7f8888"/>
  <rect x="${SEL}" y="67" width="1000" height="4" fill="#fff"/><path d="M${SEL} 62h7l-7 9z" fill="#ddd"/>
  <path d="${grid.map((x) => `M${x}.5 67v4`).join('')}" stroke="#999"/>
  <path d="${bars.slice(1).map(([x]) => `M${x}.5 41v30`).join('')}" stroke="#999"/>
  <path d="${tempos.filter((t) => t[0] !== SEL).map(([x]) => `M${x}.5 36v35`).join('')}" stroke="#111"/>
  <path d="M${CURSOR - 8} 40.500h17l-8.500 9z" fill="#5a2020" stroke="#eee"/><path d="M${CURSOR}.5 50v21" stroke="#5a1010"/>`;

/* deterministic noise for the note and peak drawings */
let seed = 7;
const rnd = () => (seed = (seed * 16807) % 2147483647) / 2147483647;
const dashes = (a, b, y, len, gap) => {
  let d = '';
  for (let x = a; x < b; x += len + gap + Math.floor(rnd() * 3)) d += `M${x} ${y}h${Math.min(len, b - x)}`;
  return d;
};
let drums = '';
for (let x = 42; x < 282; x += 14) drums += `M${x} 33.500h4M${x + 4} 32.500h3M${x + 6} 31.500h4M${x + 9} 30.500h5`;
drums += dashes(0, 42, 31.5, 4, 8) + dashes(0, 282, 34.5, 6, 3) + dashes(282, 299, 32.5, 17, 0);
[[300, 382], [417, 500]].forEach(([a, b]) => { drums += dashes(a, b, 28.5, 3, 5) + dashes(a, b, 34.5, 4, 3); });
[[382, 417], [500, 637], [860, 900], [1220, 1260]].forEach(([a, b]) => { drums += dashes(a, b, 34.5, 3, 2) + dashes(a, b, 32.5, 3, 5) + dashes(a, b, 30.5, 3, 7); });
[[502, 618], [807, 845], [858, 912], [927, 963], [1480, 1516], [1545, 1592], [1596, 1618]].forEach(([a, b]) => { drums += dashes(a, b, 28.5, 4, 1) + dashes(a, b, 34.5, 4, 1); });
drums += dashes(502, 636, 35.5, 4, 2) + 'M703 34.500h52M755 32.500h45M1518 32.500h26' + dashes(1007, 1182, 33.5, 20, 3) + dashes(1007, 1230, 34.5, 6, 2) + dashes(1180, 1240, 30.5, 3, 6) + dashes(1240, 1480, 28.5, 3, 6) + dashes(1240, 1480, 34.5, 5, 2) + dashes(1240, 1480, 31.5, 2, 11) + dashes(1240, 1480, 36.5, 1, 14);

const bassNotes = [[1, 7, 12], [24, 36, 12], [53, 68, 12], [67, 73, 7], [73, 86, 8], [86, 96, 13], [96, 107, 7], [107, 112, 8], [111, 125, 12], [125, 131, 7], [131, 144, 8], [144, 153, 13], [153, 159, 12], [157, 165, 9], [165, 183, 12], [183, 189, 7], [189, 201, 8], [201, 212, 13], [212, 224, 7], [224, 227, 8], [226, 241, 12], [241, 246, 7], [246, 260, 8], [260, 266, 13], [266, 274, 11], [274, 284, 10], [300, 328, 12], [328, 357, 13], [357, 386, 10], [386, 394, 11], [400, 415, 10], [415, 444, 12], [444, 473, 13], [473, 502, 10], [502, 509, 11], [530, 559, 12], [559, 589, 13], [589, 617, 10], [617, 624, 11], [632, 637, 10], [1002, 1014, 11], [1271, 1461, 12], [1311, 1318, 10], [1364, 1370, 8], [1414, 1421, 10], [1544, 1549, 12]];
for (let x = 1024; x < 1200; x += 52) bassNotes.push([x, x + 9, 9], [x + 9, x + 15, 11], [x + 15, x + 23, 13], [x + 26, x + 37, 11], [x + 42, x + 51, 12]);
for (let x = 1550; x < 1618; x += 52) bassNotes.push([x, x + 12, 9], [x + 12, x + 20, 11], [x + 20, x + 32, 13], [x + 34, x + 46, 11]);
let bass = bassNotes.map(([a, b, y]) => `M${a} ${y + 336}.5h${b - a}`).join('');
bass += 'M39 338l5 5 4 0 5-4M995 341l8 7M1220 343l12 8M1460 341l5 7' + dashes(808, 846, 348.5, 7, 5) + dashes(858, 892, 348.5, 8, 2) + dashes(892, 910, 343.5, 3, 3) + dashes(892, 910, 340.5, 3, 5) + dashes(910, 948, 348.5, 7, 4) + dashes(962, 996, 348.5, 8, 3) + dashes(1211, 1240, 347.5, 5, 1) + dashes(1211, 1240, 343.5, 3, 4) + dashes(1464, 1516, 348.5, 6, 5) + 'M1059 339h7M1162 339h7M1589 339h7';

const items = [[53, 284], [300, 394], [400, 408], [409, 509], [530, 626], [632, 638], [800, 1014], [1220, 1272], [1272, 1473], [1473, 1479], [1479, 1545], [1545, 1640]];
const item = ([a, b], y) => {
  let s = `<rect x="${a + 2}" y="${y + 2}" width="${b - a}" height="20" fill="#8c9090"/><rect x="${a}.5" y="${y}.5" width="${b - a}" height="19" fill="url(#itemFill)" stroke="#505656"/><path d="M${a} ${y + 20}h${b - a}" stroke="#3c4040"/>`;
  if (b - a > 20) {
    s += `<path d="M${a} ${y + 15}l5 6h-5z" fill="#fff"/>`;
    const end = a === 1545 ? 0 : b - 6, dense = a > 700 ? 4 : 8;
    for (let x = a + 12; x < end; x += 2 + Math.floor(rnd() * dense)) {
      s += `<path d="M${x}.5 ${y + 1}v18" stroke="#7f9c98" opacity=".45"/>`;
      if (rnd() < .6) s += `<path d="M${x - 4} ${y + 15}l4-4 4 4-4 4z" fill="${rnd() < .5 ? '#5a9cc0' : '#b8706a'}" opacity="${a === 53 ? .22 : .14}"/>`;
    }
  }
  return s;
};
const audio = [384, 408].map((y, r) => items.map((i) => item(i, y)).join('') +
  [1570, 1580, 1596].map((x, i) => `<path d="M${x}.5 ${y + 1}v18" stroke="#6a9c94"/><path d="M${x - 4} ${y + 15}l4-4 4 4-4 4z" fill="${i > 1 ? '#b07070' : '#5a9cc0'}" opacity=".7"/>`).join('') +
  `<g fill="#7f9c98" font-size="12"><text x="78" y="${y + 15}">1.0</text><text x="1582" y="${y + 15}">${r ? '0.9' : '1.0'}</text><text x="1597" y="${y + 15}">${r ? '1.01' : '0.99'}</text></g>`).join('');
const midiItem = (y) => `<rect x="0" y="${y}" width="1640" height="20" fill="url(#itemFill)"/><path d="M0 ${y}.5h1640M0 ${y + 20}.5h1640" stroke="#4a5050"/>`;
const vlines = (xs, color, extra = '') => `<path d="${xs.map((x) => `M${x}.5 0v1400`).join('')}" stroke="${color}" ${extra}/>`;

$('#lanes').innerHTML = tracks.map((t) => `<div class="lane${t.muted ? ' muted' : ''}"></div>`).join('') +
  `<svg class="canvas">${vlines(grid, '#959795', 'stroke-dasharray="2 2"')}
  ${midiItem(24)}${midiItem(336)}${vlines(grid, '#959795', 'stroke-dasharray="2 2" opacity=".5"')}
  <path d="${drums}" stroke="#333"/><path d="${drums}" stroke="#999" transform="translate(0 -24)"/><path d="${bass}" stroke="#333" fill="none"/>${audio}
  </svg><svg class="canvas lighten"><rect x="${SEL}" y="0" width="1640" height="1400" fill="#181818"/></svg>
  <svg class="canvas">${vlines([675, SEL], '#7f8888')}${vlines([284, 299, 1480, 1518], '#111')}${vlines([CURSOR], '#5a1010')}</svg>`;
```
